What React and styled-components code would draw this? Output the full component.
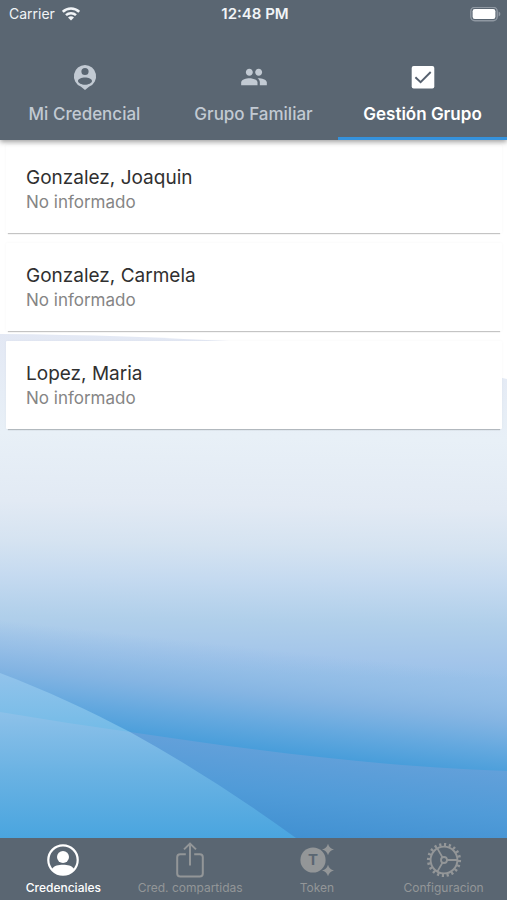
import React, { useState } from "react";
import styled, { createGlobalStyle } from "styled-components";
import { MdGroup } from "react-icons/md";

const GlobalStyle = createGlobalStyle`
  *, *::before, *::after { box-sizing: border-box; }
  body { margin: 0; font-family: "Inter", "Roboto", "Liberation Sans", sans-serif; }
  button { font: inherit; border: 0; background: none; padding: 0; cursor: pointer; }
`;

const Screen = styled.div`
  display: flex;
  flex-direction: column;
  min-height: 100vh;
  background: #fff;
`;

const Header = styled.header`
  position: relative;
  z-index: 1;
  background: #5a6672;
  box-shadow: 0 2px 5px rgba(0, 0, 0, 0.38);
`;

const StatusBar = styled.div`
  display: grid;
  grid-template-columns: 1fr auto 1fr;
  align-items: center;
  height: 28px;
  padding: 0 6px 0 9px;
  color: #f1f4f7;
  font-size: 14px;
  line-height: 20px;
`;

const Carrier = styled.span`
  display: flex;
  align-items: center;
  gap: 7px;
`;

const Clock = styled.time`
  font-size: 15px;
  font-weight: 600;
`;

const Battery = styled.svg`
  justify-self: end;
`;

const TabList = styled.div`
  display: grid;
  grid-template-columns: repeat(3, 1fr);
  height: 112px;
`;

const TabButton = styled.button`
  display: flex;
  flex-direction: column;
  align-items: center;
  justify-content: flex-end;
  gap: 12px;
  padding-bottom: 12px;
  border-bottom: 3px solid ${(p) => (p.$active ? "#3592dc" : "transparent")};
  color: ${(p) => (p.$active ? "#ffffff" : "#c2cad3")};
  font-size: 17px;
  font-weight: ${(p) => (p.$active ? 600 : 500)};
  line-height: 22px;
  white-space: nowrap;
`;

const Main = styled.main`
  position: relative;
  isolation: isolate;
  flex: 1;
`;

const Backdrop = styled.svg`
  position: absolute;
  inset: 0;
  z-index: -1;
  width: 100%;
  height: 100%;
`;

const MemberList = styled.ul`
  display: flex;
  flex-direction: column;
  gap: 10px;
  margin: 0;
  padding: 5px 5px 10px 6px;
  list-style: none;
`;

const MemberCard = styled.li`
  height: 88px;
  padding: 20px;
  background: #fff;
  border-radius: 1px;
  box-shadow: 0 3px 1px -2px rgba(0, 0, 0, 0.22), 0 0 3px rgba(0, 0, 0, 0.04);
`;

const MemberName = styled.h2`
  margin: 0;
  color: #303030;
  font-size: 19px;
  font-weight: 400;
  line-height: 25px;
`;

const MemberNote = styled.p`
  margin: 1px 0 0;
  color: #858585;
  font-size: 17px;
  line-height: 22px;
`;

const BottomNav = styled.nav`
  display: grid;
  grid-template-columns: repeat(4, 1fr);
  height: 62px;
  background: #5a6672;
`;

const NavButton = styled.button`
  display: flex;
  flex-direction: column;
  align-items: center;
  gap: 2px;
  padding-top: 4px;
  color: ${(p) => (p.$active ? "#ffffff" : "#939698")};
  font-size: 12px;
  font-weight: ${(p) => (p.$active ? 500 : 400)};
  line-height: 16px;
  white-space: nowrap;
`;

function WifiIcon() {
  return (
    <svg width="18" height="14" viewBox="0 0 18 14" fill="none" stroke="currentColor" strokeWidth="2.5" aria-hidden="true">
      <path d="M.8 4.800a11.600 11.600 0 0 1 16.400 0" />
      <path d="M4 8.200a7.100 7.100 0 0 1 10 0" />
      <path d="M9 13.600 6 10.600a4.300 4.300 0 0 1 6 0Z" fill="currentColor" stroke="none" />
    </svg>
  );
}

function BatteryIcon() {
  return (
    <Battery width="31" height="15" viewBox="0 0 31 15" role="img" aria-label="Batería">
      <rect x="0.8" y="0.3" width="26.4" height="13.4" rx="4" fill="none" stroke="#8f98a2" strokeWidth="1.4" />
      <rect x="2.6" y="2.1" width="22.8" height="9.8" rx="2.2" fill="#fff" />
      <path d="M28.6 4.500v5q1.800-.8 1.800-2.500t-1.800-2.500Z" fill="#8f98a2" />
    </Battery>
  );
}

function PersonPinIcon() {
  return (
    <svg width="28" height="28" viewBox="0 0 28 28" fill="currentColor" fillRule="evenodd" aria-hidden="true">
      <path d="M14 2a11.200 11.200 0 0 1 4.300 21.500L14 27l-4.300-3.500A11.200 11.200 0 0 1 14 2Zm0 2.900a3.600 3.600 0 1 0 0 7.200 3.600 3.600 0 0 0 0-7.200Zm0 9.700c-3.400 0-7 1.400-7 3.500s3.600 3.700 7 3.700 7-1.600 7-3.700-3.600-3.500-7-3.500Z" />
    </svg>
  );
}

function CheckIcon() {
  return (
    <svg width="26" height="28" viewBox="0 0 26 28" aria-hidden="true">
      <rect x="1.7" y="3" width="22.6" height="22.6" rx="2" fill="#fff" />
      <path d="m5.400 14.200 5.200 5L20.700 9" fill="none" stroke="#56616f" strokeWidth="1.9" />
    </svg>
  );
}

function AccountIcon() {
  return (
    <svg width="36" height="36" viewBox="0 0 36 36" aria-hidden="true">
      <circle cx="18" cy="18" r="14.7" fill="none" stroke="currentColor" strokeWidth="2.2" />
      <circle cx="18" cy="15" r="6" fill="currentColor" />
      <path d="M7 27c2.4-3.6 6.400-4.200 11-4.200s8.600.6 11 4.200c-2.600 3.500-6.500 5.700-11 5.700S9.600 30.500 7 27Z" fill="currentColor" />
    </svg>
  );
}

function ShareIcon() {
  return (
    <svg width="36" height="36" viewBox="0 0 36 36" fill="none" stroke="currentColor" strokeWidth="2" aria-hidden="true">
      <path d="M13.800 12.200H8.200a3 3 0 0 0-3 3v16.300a3 3 0 0 0 3 3h19.600a3 3 0 0 0 3-3V15.200a3 3 0 0 0-3-3h-5.600" />
      <path d="M18 23.500V1.900M12 7.400l6-5.800 6 5.800" />
    </svg>
  );
}

const TokenLetter = styled.text`
  font-size: 15px;
  font-weight: 700;
  text-anchor: middle;
  fill: #5a6672;
`;

function TokenIcon() {
  return (
    <svg width="36" height="36" viewBox="0 0 36 36" fill="currentColor" aria-hidden="true">
      <circle cx="14" cy="18" r="12.600" />
      <TokenLetter x="14" y="23">T</TokenLetter>
      <path d="M29 1.700q1.200 4.500 6 5.800-4.800 1.300-6 5.800-1.200-4.500-6-5.800 4.800-1.300 6-5.800Z" />
      <path d="M29 22.700q1.200 4.500 6 5.800-4.800 1.300-6 5.800-1.200-4.500-6-5.800 4.800-1.300 6-5.800Z" />
    </svg>
  );
}

function GearIcon() {
  return (
    <svg width="36" height="36" viewBox="0 0 36 36" fill="none" stroke="currentColor" aria-hidden="true">
      <circle cx="18" cy="18" r="15.500" strokeWidth="3.200" pathLength="80" strokeDasharray="1.800 2.200" />
      <circle cx="18" cy="18" r="13.400" strokeWidth="1.900" />
      <circle cx="18" cy="18" r="3" strokeWidth="1.800" />
      <path d="M21 18h10.500M16.500 15.400 11.300 6.400M16.500 20.600l-5.200 9" strokeWidth="1.800" />
    </svg>
  );
}

function WaveBackdrop() {
  return (
    <Backdrop viewBox="0 140 507 698" preserveAspectRatio="xMidYMax slice" aria-hidden="true">
      <defs>
        <linearGradient id="sky" gradientUnits="userSpaceOnUse" x1="0" y1="330" x2="-6" y2="670">
          <stop offset="0" stopColor="#e3e8f4" />
          <stop offset="0.3" stopColor="#e8f0f7" />
          <stop offset="0.5" stopColor="#e2eaf4" />
          <stop offset="0.62" stopColor="#d5e3f1" />
          <stop offset="0.72" stopColor="#c5daf0" />
          <stop offset="0.84" stopColor="#b0cfea" />
          <stop offset="0.95" stopColor="#a3c5ea" />
          <stop offset="1" stopColor="#9bc2e9" />
        </linearGradient>
        <linearGradient id="deep" gradientUnits="userSpaceOnUse" x1="0" y1="620" x2="-11" y2="722">
          <stop offset="0" stopColor="#8ab8e4" stopOpacity="0" />
          <stop offset="0.25" stopColor="#88b7e3" stopOpacity="0.5" />
          <stop offset="0.45" stopColor="#82b3e2" stopOpacity="0.9" />
          <stop offset="0.72" stopColor="#66a9df" />
          <stop offset="1" stopColor="#479dda" />
        </linearGradient>
        <linearGradient id="tip" x1="0" y1="0" x2="0" y2="1">
          <stop offset="0" stopColor="#92c3eb" />
          <stop offset="1" stopColor="#72bbe7" />
        </linearGradient>
        <linearGradient id="near" gradientUnits="userSpaceOnUse" x1="0" y1="712" x2="0" y2="838">
          <stop offset="0" stopColor="#8dc1e9" />
          <stop offset="0.5" stopColor="#69b2e3" />
          <stop offset="1" stopColor="#4aa5df" />
        </linearGradient>
        <linearGradient id="far" gradientUnits="userSpaceOnUse" x1="180" y1="730" x2="168" y2="848">
          <stop offset="0" stopColor="#66a1da" />
          <stop offset="0.45" stopColor="#509bd8" />
          <stop offset="1" stopColor="#398bce" />
        </linearGradient>
      </defs>
      <rect y="140" width="507" height="698" fill="#fff" />
      <path d="M0 334Q130 335 240 342Q400 354 507 379V838H0Z" fill="url(#sky)" />
      <path d="M0 600H507V838H0Z" fill="url(#deep)" />
      <path d="M130 732C250 750 380 767 507 771V838H100Z" fill="url(#far)" />
      <path d="M0 673C45 690 90 711 130 732L130 734L0 713Z" fill="url(#tip)" />
      <path d="M0 712Q65 723 130 732Q215 779 296 838H0Z" fill="url(#near)" />
    </Backdrop>
  );
}

const tabs = [
  { label: "Mi Credencial", icon: <PersonPinIcon /> },
  { label: "Grupo Familiar", icon: <MdGroup size={28} /> },
  { label: "Gestión Grupo", icon: <CheckIcon /> },
];

const members = [
  { name: "Gonzalez, Joaquin", note: "No informado" },
  { name: "Gonzalez, Carmela", note: "No informado" },
  { name: "Lopez, Maria", note: "No informado" },
];

const sections = [
  { label: "Credenciales", icon: <AccountIcon /> },
  { label: "Cred. compartidas", icon: <ShareIcon /> },
  { label: "Token", icon: <TokenIcon /> },
  { label: "Configuracion", icon: <GearIcon /> },
];

export default function App() {
  const [tab, setTab] = useState(2);
  const [section, setSection] = useState(0);

  return (
    <Screen>
      <GlobalStyle />
      <Header>
        <StatusBar>
          <Carrier>
            Carrier
            <WifiIcon />
          </Carrier>
          <Clock>12:48 PM</Clock>
          <BatteryIcon />
        </StatusBar>
        <TabList role="tablist">
          {tabs.map((t, i) => (
            <TabButton
              key={t.label}
              type="button"
              role="tab"
              aria-selected={tab === i}
              $active={tab === i}
              onClick={() => setTab(i)}
            >
              {t.icon}
              {t.label}
            </TabButton>
          ))}
        </TabList>
      </Header>
      <Main>
        <WaveBackdrop />
        <MemberList>
          {members.map((m) => (
            <MemberCard key={m.name}>
              <MemberName>{m.name}</MemberName>
              <MemberNote>{m.note}</MemberNote>
            </MemberCard>
          ))}
        </MemberList>
      </Main>
      <BottomNav aria-label="Secciones">
        {sections.map((s, i) => (
          <NavButton
            key={s.label}
            type="button"
            aria-current={section === i ? "page" : undefined}
            $active={section === i}
            onClick={() => setSection(i)}
          >
            {s.icon}
            {s.label}
          </NavButton>
        ))}
      </BottomNav>
    </Screen>
  );
}
